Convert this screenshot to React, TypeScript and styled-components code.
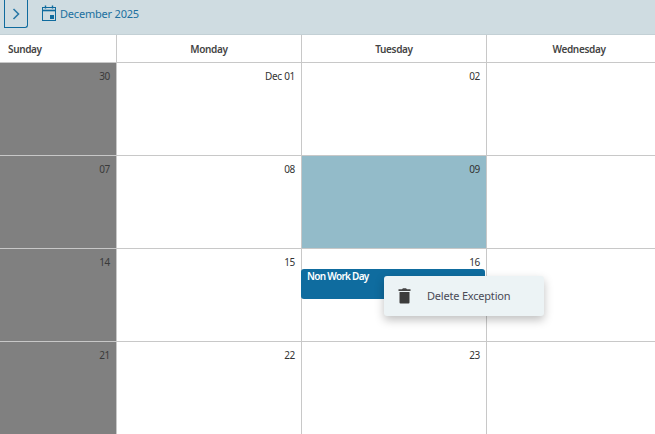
import React from 'react'
import styled, { createGlobalStyle } from 'styled-components'

const Global = createGlobalStyle`
  html, body { margin: 0; padding: 0; background: #fff; overflow: hidden; }
  body { font-family: "Noto Sans", "Open Sans", sans-serif; }
`

const Page = styled.div`
  width: 655px;
  height: 434px;
  overflow: hidden;
  position: relative;
`
const Toolbar = styled.div`
  height: 34px;
  background: #cfdce1;
  border-bottom: 1px solid #c3d0d5;
  display: flex;
  align-items: flex-start;
`
const NavButton = styled.div`
  width: 24px;
  height: 28px;
  box-sizing: border-box;
  margin-left: 4px;
  border-left: 1px solid #0f6b9e;
  border-right: 1px solid #0f6b9e;
  border-bottom: 1px solid #0f6b9e;
  border-bottom-right-radius: 3px;
  display: flex;
  align-items: center;
  justify-content: center;
`
const DateLabel = styled.div`
  display: flex;
  align-items: center;
  gap: 4px;
  margin-left: 14px;
  height: 26px;
  font-size: 11px;
  letter-spacing: -0.2px;
  color: #20709f;
`
const Grid = styled.div`
  display: grid;
  grid-template-columns: 117px 185px 185px 185px;
  grid-template-rows: 28px repeat(4, 93px);
`
const HeadCell = styled.div<{ $left?: boolean }>`
  box-sizing: border-box;
  border-right: 1px solid #c8c8c8;
  border-bottom: 1px solid #c8c8c8;
  display: flex;
  align-items: center;
  justify-content: ${p => (p.$left ? 'flex-start' : 'center')};
  padding-left: ${p => (p.$left ? '8px' : '0')};
  font-size: 10px;
  font-weight: 600;
  letter-spacing: -0.35px;
  color: #444;
`
const DayCell = styled.div<{ $tone?: 'off' | 'selected' }>`
  box-sizing: border-box;
  border-right: 1px solid #c8c8c8;
  border-bottom: 1px solid #c8c8c8;
  background: ${p => (p.$tone === 'off' ? '#808080' : p.$tone === 'selected' ? '#93bbc9' : '#fff')};
  padding: 6px 6px 0 0;
  text-align: right;
  font-size: 10px;
  letter-spacing: -0.3px;
  line-height: 14px;
  color: ${p => (p.$tone === 'off' ? '#3a3a3a' : '#333')};
  position: relative;
`
const EventBar = styled.div`
  position: absolute;
  left: -1px;
  top: 20px;
  width: 184px;
  height: 30px;
  box-sizing: border-box;
  background: #0f6c9f;
  border-radius: 3px;
  padding: 0 0 0 6px;
  text-align: left;
  font-size: 10px;
  font-weight: 600;
  letter-spacing: -0.7px;
  line-height: 14px;
  color: #fff;
`
const Menu = styled.div`
  position: absolute;
  left: 384px;
  top: 276px;
  width: 160px;
  height: 40px;
  box-sizing: border-box;
  padding-bottom: 1px;
  background: #ecf3f5;
  border-radius: 3px;
  box-shadow: 0 4px 10px rgba(0, 0, 0, 0.25);
  display: flex;
  align-items: center;
  font-size: 11px;
  letter-spacing: -0.2px;
  color: #4a4a55;
`
const MenuIcon = styled.span`
  width: 41px;
  margin-right: 2px;
  display: flex;
  justify-content: center;
`

const weeks = [
  ['30', 'Dec 01', '02', ''],
  ['07', '08', '09', ''],
  ['14', '15', '16', ''],
  ['21', '22', '23', '']
]
const days = ['Sunday', 'Monday', 'Tuesday', 'Wednesday']

function CalendarIcon() {
  return (
    <svg width="14" height="16" viewBox="0 0 14 16" fill="none" stroke="#0f6b9e">
      <rect x="0.5" y="2.5" width="13" height="13" />
      <path d="M0.5 5.5h13" strokeWidth="1.6" />
      <path d="M3.5 0.5v3M10.5 0.5v3" strokeWidth="1.4" />
      <rect x="8" y="10" width="4" height="4" fill="#0f6b9e" stroke="none" />
    </svg>
  )
}

function TrashIcon() {
  return (
    <svg width="13" height="16" viewBox="0 0 13 16" style={{ display: 'block' }}>
      <path d="M4 1.2L5 0.2h3l1 1h3.5v1.8H0.5V1.2z" fill="#444" />
      <path d="M1.5 4h10V14.5a1 1 0 0 1-1 1h-8a1 1 0 0 1-1-1z" fill="#3c3c3c" />
    </svg>
  )
}

export default function App() {
  return (
    <Page>
      <Global />
      <Toolbar>
        <NavButton>
          <svg width="8" height="12" viewBox="0 0 8 12" fill="none" stroke="#2a78a6" strokeWidth="1.6">
            <path d="M1.5 1l5 5-5 5" />
          </svg>
        </NavButton>
        <DateLabel>
          <CalendarIcon />
          December 2025
        </DateLabel>
      </Toolbar>
      <Grid>
        {days.map((d, i) => (
          <HeadCell key={d} $left={i === 0}>{d}</HeadCell>
        ))}
        {weeks.map((week, w) =>
          week.map((label, i) => (
            <DayCell key={`${w}-${i}`} $tone={i === 0 ? 'off' : w === 1 && i === 2 ? 'selected' : undefined}>
              {label}
              {w === 2 && i === 2 && <EventBar>Non Work Day</EventBar>}
            </DayCell>
          ))
        )}
      </Grid>
      <Menu>
        <MenuIcon><TrashIcon /></MenuIcon>
        Delete Exception
      </Menu>
    </Page>
  )
}
